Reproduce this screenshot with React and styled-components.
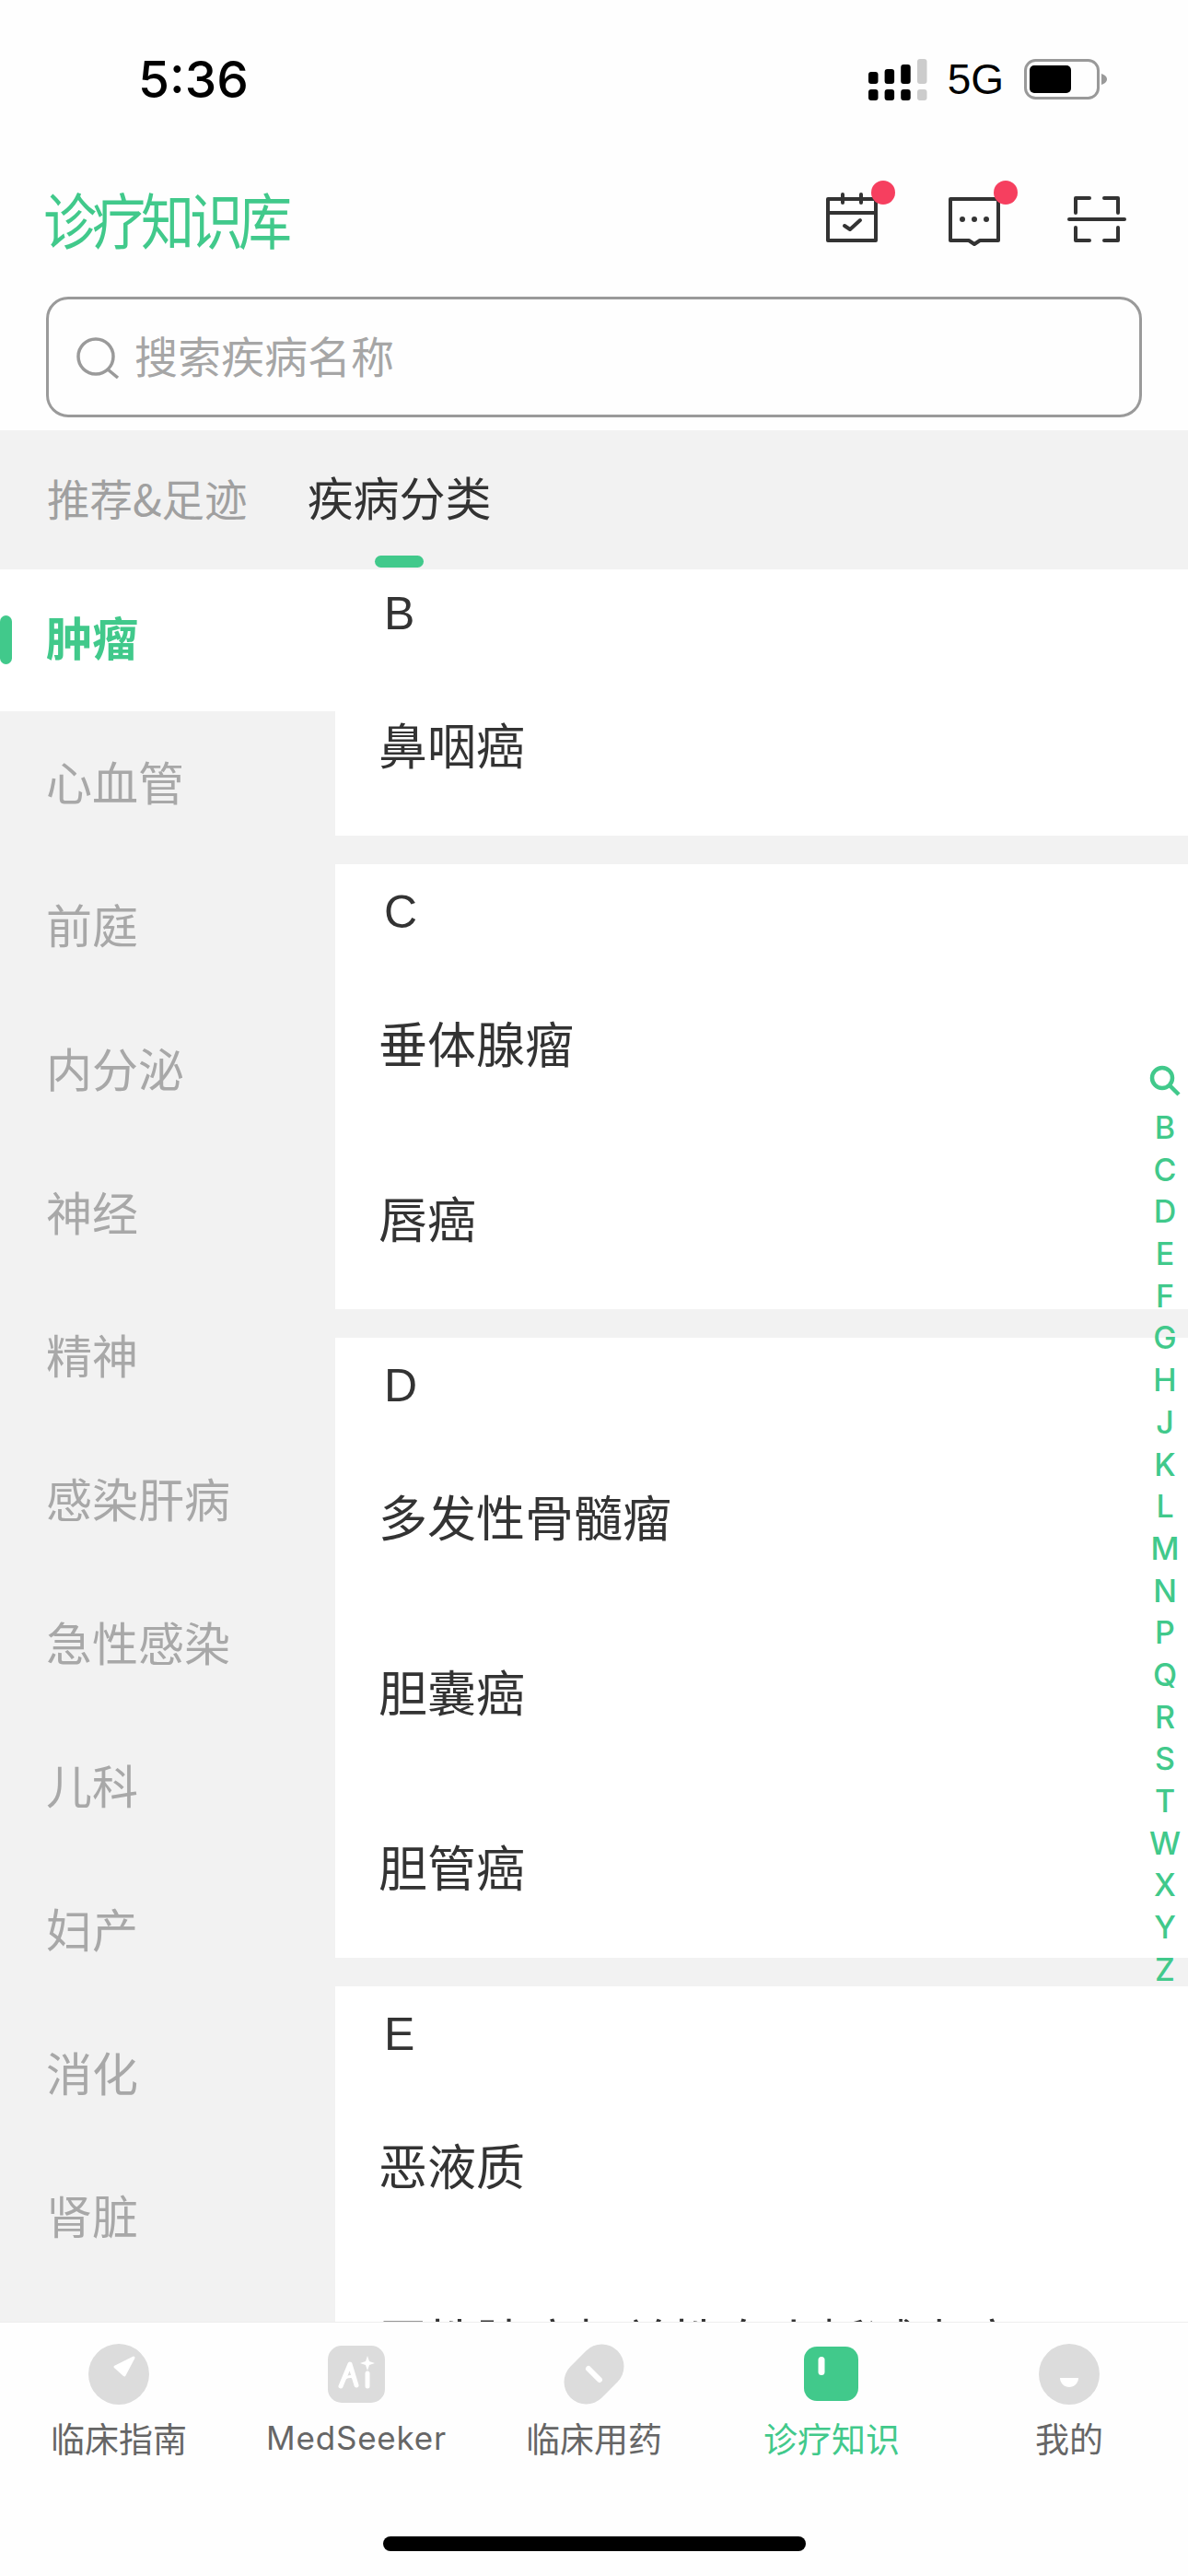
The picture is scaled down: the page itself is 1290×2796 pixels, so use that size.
import React from 'react';
import styled, { createGlobalStyle } from 'styled-components';

const GREEN = '#41c98b';
const CJK = '"Noto Sans CJK SC", "Noto Sans", sans-serif';
const LATIN = '"Liberation Sans", "Noto Sans CJK SC", sans-serif';

const Global = createGlobalStyle`
    html, body {
        margin: 0;
        padding: 0;
        background: #fefefe;
    }
    * {
        box-sizing: border-box;
    }
`;

const Page = styled.div`
    position: relative;
    width: 1290px;
    height: 2796px;
    display: flex;
    flex-direction: column;
    overflow: hidden;
    background: #fefefe;
    font-family: ${CJK};
`;

const StatusBar = styled.div`
    height: 170px;
    flex: none;
    display: flex;
    justify-content: space-between;
    align-items: flex-start;
    padding: 55px 86px 0 150px;
`;
const Clock = styled.div`
    font-family: Inter, ${LATIN};
    font-size: 55px;
    font-weight: 500;
    line-height: 62px;
    color: #000;
`;
const StatusRight = styled.div`
    display: flex;
    align-items: center;
    margin-top: 8px;
`;
const NetLabel = styled.div`
    font-family: ${LATIN};
    font-size: 46px;
    line-height: 46px;
    color: #000;
    margin: 0 22px 0 22px;
`;

const Header = styled.div`
    height: 136px;
    flex: none;
    display: flex;
    justify-content: space-between;
    align-items: center;
    padding: 0 67px 0 47px;
`;
const Logo = styled.div`
    font-size: 58px;
    font-weight: 400;
    line-height: 68px;
    letter-spacing: -5px;
    color: ${GREEN};
    margin-bottom: 4px;
    transform: scaleY(1.14);
    transform-origin: left center;
`;
const HeaderIcons = styled.div`
    display: flex;
    gap: 69px;
`;
const IconWrap = styled.div`
    position: relative;
    width: 64px;
    height: 64px;
`;
const RedDot = styled.span`
    position: absolute;
    left: 53px;
    top: -10px;
    width: 26px;
    height: 26px;
    border-radius: 50%;
    background: #f63f5f;
`;

const SearchWrap = styled.div`
    flex: none;
    padding: 16px 50px 14px;
`;
const SearchBox = styled.div`
    height: 131px;
    display: flex;
    align-items: center;
    gap: 15px;
    padding-left: 30px;
    border: 3px solid #9a9a9a;
    border-radius: 24px;
`;
const Placeholder = styled.div`
    font-size: 47px;
    font-weight: 400;
    line-height: 60px;
    padding-bottom: 6px;
    color: #a6a6a6;
`;

const Tabs = styled.div`
    height: 151px;
    flex: none;
    display: flex;
    align-items: baseline;
    gap: 65px;
    padding: 40px 0 0 51px;
    background: #f2f2f2;
`;
const Tab = styled.div`
    position: relative;
    height: 111px;
    font-size: ${(p) => (p.$active ? '50px' : '46.5px')};
    font-weight: 400;
    line-height: 62px;
    color: ${(p) => (p.$active ? '#333' : '#a0a0a0')};
    &::after {
        content: '';
        display: ${(p) => (p.$active ? 'block' : 'none')};
        position: absolute;
        left: 73px;
        top: 96px;
        width: 53px;
        height: 13px;
        border-radius: 7px;
        background: ${GREEN};
    }
`;

const Body = styled.div`
    flex: 1;
    min-height: 0;
    display: flex;
    overflow: hidden;
`;
const Sidebar = styled.div`
    width: 364px;
    flex: none;
    background: #f2f2f2;
`;
const SideItem = styled.div`
    position: relative;
    height: ${(p) => (p.$active ? '154px' : '155.7px')};
    margin-bottom: ${(p) => (p.$active ? '1.7px' : '0')};
    display: flex;
    align-items: center;
    padding: 0 0 10px 50px;
    font-size: 50px;
    font-weight: ${(p) => (p.$active ? 700 : 400)};
    color: ${(p) => (p.$active ? GREEN : '#a8a8a8')};
    background: ${(p) => (p.$active ? '#fff' : 'transparent')};
    &::before {
        content: '';
        display: ${(p) => (p.$active ? 'block' : 'none')};
        position: absolute;
        left: 0;
        top: 50px;
        width: 13px;
        height: 53px;
        border-radius: 7px;
        background: ${GREEN};
    }
`;

const Content = styled.div`
    flex: 1;
    margin-top: -4px;
    background: #f2f2f2;
`;
const Section = styled.div`
    background: #fff;
    margin-bottom: 31px;
`;
const SectionHead = styled.div`
    height: 103px;
    padding: 22px 0 0 53px;
    font-family: ${LATIN};
    font-size: 50px;
    line-height: 60px;
    color: #333;
`;
const Row = styled.div`
    height: 190px;
    display: flex;
    align-items: center;
    padding: 0 0 10px 47px;
    font-size: 53px;
    font-weight: 400;
    color: #333;
`;

const IndexBar = styled.div`
    position: absolute;
    top: 1156px;
    right: 0;
    width: 50px;
    display: flex;
    flex-direction: column;
    align-items: center;
`;
const IndexLetter = styled.div`
    height: 45.7px;
    font-family: Inter, ${LATIN};
    font-size: 34px;
    font-weight: 500;
    line-height: 45.7px;
    color: ${GREEN};
`;
const IndexSearch = styled.svg`
    display: block;
    margin-bottom: 11px;
`;

const TabBar = styled.div`
    height: 276px;
    flex: none;
    display: grid;
    grid-template-columns: repeat(5, 258px);
    align-content: start;
    padding-top: 23px;
    background: #fefefe;
    border-top: 1px solid #eee;
`;
const TabItem = styled.div`
    display: flex;
    flex-direction: column;
    align-items: center;
`;
const TabLabel = styled.div`
    margin-top: 11px;
    font-family: ${(p) => (p.$latin ? 'Inter, ' + CJK : CJK)};
    font-size: ${(p) => (p.$latin ? '35px' : '37px')};
    font-weight: 400;
    line-height: 50px;
    letter-spacing: ${(p) => (p.$latin ? '0.8px' : '0')};
    color: ${(p) => (p.$active ? GREEN : '#666')};
`;
const HomeBar = styled.div`
    position: absolute;
    left: 416px;
    bottom: 27px;
    width: 459px;
    height: 16px;
    border-radius: 8px;
    background: #000;
`;

const SignalIcon = () => {
    const xs = [0, 17.6, 35.2, 53];
    const tops = [14, 11, 6, 0];
    return (
        <svg width="64" height="45" viewBox="0 0 64 45">
            {xs.map((x, i) => (
                <g key={x} fill={i === 3 ? '#ccc' : '#000'}>
                    <rect x={x} y={tops[i]} width="10.5" height={27 - tops[i]} rx="3" />
                    <rect x={x} y="33" width="10.5" height="12" rx="3" />
                </g>
            ))}
        </svg>
    );
};

const BatteryIcon = () => (
    <svg width="92" height="44" viewBox="0 0 92 44">
        <rect x="1.5" y="1.5" width="79" height="41" rx="11" fill="none" stroke="#999" strokeWidth="3" />
        <rect x="6" y="7" width="45" height="30" rx="5" fill="#000" />
        <path d="M84 16c3 1 6 3 6 6s-3 5-6 6z" fill="#999" />
    </svg>
);

const CalendarIcon = () => (
    <svg width="64" height="64" viewBox="0 0 64 64" fill="none" stroke="#333" strokeWidth="4" strokeLinejoin="round" strokeLinecap="round">
        <rect x="6" y="10" width="52" height="45" />
        <path d="M6 25H58" />
        <path d="M22 5V14M42 5V14" />
        <path d="M24 39L30 43L41 33" />
    </svg>
);

const ChatIcon = () => (
    <svg width="64" height="64" viewBox="0 0 64 64" fill="none" stroke="#333" strokeWidth="4" strokeLinejoin="round">
        <path d="M6 10H58V55H38L32 59L26 55H6Z" />
        <g fill="#333" stroke="none">
            <circle cx="19" cy="32" r="3" />
            <circle cx="32" cy="32" r="3" />
            <circle cx="45" cy="32" r="3" />
        </g>
    </svg>
);

const ScanIcon = () => (
    <svg width="64" height="64" viewBox="0 0 64 64" fill="none" stroke="#333" strokeWidth="4" strokeLinecap="round" strokeLinejoin="round">
        <path d="M9 25V9H24M40 9H55V25" />
        <path d="M9 41V55H24M40 55H55V41" />
        <path d="M2 32H62" />
    </svg>
);

const SearchIcon = () => (
    <svg width="48" height="46" viewBox="0 0 48 46" fill="none" stroke="#9a9a9a" strokeWidth="3.5">
        <circle cx="21" cy="22" r="19" />
        <path d="M34 36L45 45" />
    </svg>
);

const GuideIcon = () => (
    <svg width="66" height="66" viewBox="0 0 66 66">
        <circle cx="33" cy="33" r="33" fill="#dcdcdc" />
        <path d="M49 15L29 25L39 34Z" fill="#fff" stroke="#fff" strokeWidth="3" strokeLinejoin="round" />
    </svg>
);

const AiIcon = () => (
    <svg width="66" height="66" viewBox="0 0 66 66">
        <rect x="2" y="2" width="62" height="62" rx="15" fill="#dcdcdc" />
        <g fill="none" stroke="#fff" strokeWidth="5" strokeLinecap="round" strokeLinejoin="round">
            <path d="M16 46L26 22L33 45" />
            <path d="M21 37C25 35 28 35 31 37" strokeWidth="3" />
            <path d="M45 32V46" />
        </g>
        <path d="M45 13L47 19L53 21L47 23L45 29L43 23L37 21L43 19Z" fill="#fff" />
    </svg>
);

const PillIcon = () => (
    <svg width="66" height="66" viewBox="0 0 66 66">
        <rect x="-3" y="9" width="72" height="48" rx="24" fill="#dcdcdc" transform="rotate(-45 33 33)" />
        <path d="M27 27L39 39" stroke="#fff" strokeWidth="6" strokeLinecap="round" />
    </svg>
);

const KnowledgeIcon = () => (
    <svg width="66" height="66" viewBox="0 0 66 66">
        <rect x="3" y="3" width="59" height="59" rx="14" fill={GREEN} />
        <rect x="18.5" y="14" width="7" height="20" rx="3.5" fill="#fff" />
    </svg>
);

const MineIcon = () => (
    <svg width="66" height="66" viewBox="0 0 66 66">
        <circle cx="33" cy="33" r="33" fill="#dcdcdc" />
        <path d="M23 37H43C43 43 38 47 33 47S23 43 23 37Z" fill="#fff" />
    </svg>
);

const SIDE_ITEMS = ['肿瘤', '心血管', '前庭', '内分泌', '神经', '精神', '感染肝病', '急性感染', '儿科', '妇产', '消化', '肾脏'];

const SECTIONS = [
    { letter: 'B', rows: ['鼻咽癌'] },
    { letter: 'C', rows: ['垂体腺瘤', '唇癌'] },
    { letter: 'D', rows: ['多发性骨髓瘤', '胆囊癌', '胆管癌'] },
    { letter: 'E', rows: ['恶液质', '恶性肿瘤相关性血小板减少症'] },
];

const LETTERS = 'BCDEFGHJKLMNPQRSTWXYZ'.split('');

const NAV = [
    { label: '临床指南', icon: <GuideIcon /> },
    { label: 'MedSeeker', icon: <AiIcon />, latin: true },
    { label: '临床用药', icon: <PillIcon /> },
    { label: '诊疗知识', icon: <KnowledgeIcon />, active: true },
    { label: '我的', icon: <MineIcon /> },
];

const App = () => {
    return (
        <Page>
            <Global />
            <StatusBar>
                <Clock>5:36</Clock>
                <StatusRight>
                    <SignalIcon />
                    <NetLabel>5G</NetLabel>
                    <BatteryIcon />
                </StatusRight>
            </StatusBar>
            <Header>
                <Logo>诊疗知识库</Logo>
                <HeaderIcons>
                    <IconWrap>
                        <CalendarIcon />
                        <RedDot />
                    </IconWrap>
                    <IconWrap>
                        <ChatIcon />
                        <RedDot />
                    </IconWrap>
                    <IconWrap>
                        <ScanIcon />
                    </IconWrap>
                </HeaderIcons>
            </Header>
            <SearchWrap>
                <SearchBox>
                    <SearchIcon />
                    <Placeholder>搜索疾病名称</Placeholder>
                </SearchBox>
            </SearchWrap>
            <Tabs>
                <Tab>推荐&足迹</Tab>
                <Tab $active>疾病分类</Tab>
            </Tabs>
            <Body>
                <Sidebar>
                    {SIDE_ITEMS.map((name, idx) => (
                        <SideItem key={name} $active={idx === 0}>
                            {name}
                        </SideItem>
                    ))}
                </Sidebar>
                <Content>
                    {SECTIONS.map((sec) => (
                        <Section key={sec.letter}>
                            <SectionHead>{sec.letter}</SectionHead>
                            {sec.rows.map((row) => (
                                <Row key={row}>{row}</Row>
                            ))}
                        </Section>
                    ))}
                </Content>
            </Body>
            <TabBar>
                {NAV.map((item) => (
                    <TabItem key={item.label}>
                        {item.icon}
                        <TabLabel $active={item.active} $latin={item.latin}>
                            {item.label}
                        </TabLabel>
                    </TabItem>
                ))}
            </TabBar>
            <IndexBar>
                <IndexSearch width="34" height="34" viewBox="0 0 34 34" fill="none" stroke={GREEN} strokeWidth="4.5">
                    <circle cx="14" cy="14" r="11" />
                    <path d="M22 22L32 32" />
                </IndexSearch>
                {LETTERS.map((l) => (
                    <IndexLetter key={l}>{l}</IndexLetter>
                ))}
            </IndexBar>
            <HomeBar />
        </Page>
    );
};

export default App;
